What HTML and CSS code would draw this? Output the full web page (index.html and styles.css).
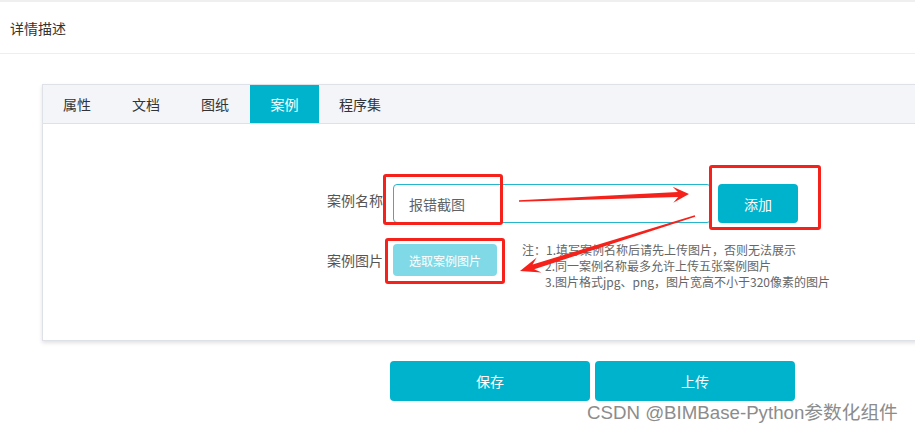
FILE: index.html
```html
<!DOCTYPE html>
<html lang="zh">
<head>
<meta charset="utf-8">
<link rel="stylesheet" href="styles.css">
</head>
<body>
<div class="page">
  <div class="topband"></div>
  <div class="header">详情描述</div>
  <div class="panel">
    <div class="tabs">
      <div class="tab">属性</div>
      <div class="tab">文档</div>
      <div class="tab">图纸</div>
      <div class="tab active">案例</div>
      <div class="tab">程序集</div>
    </div>
    <div class="panel-body">
      <div class="form-row">
        <div class="label">案例名称</div>
        <div class="controls">
          <div class="input">报错截图</div>
          <button class="btn btn-add">添加</button>
        </div>
      </div>
      <div class="form-row row2">
        <div class="label">案例图片</div>
        <div class="controls">
          <button class="btn btn-pick">选取案例图片</button>
          <div class="notes">
            <div>注：1.填写案例名称后请先上传图片，否则无法展示</div>
            <div class="indent">2.同一案例名称最多允许上传五张案例图片</div>
            <div class="indent">3.图片格式jpg、png，图片宽高不小于320像素的图片</div>
          </div>
        </div>
      </div>
    </div>
  </div>
  <div class="actions">
    <button class="btn btn-big">保存</button>
    <button class="btn btn-big">上传</button>
  </div>

  <div class="mark mark1"></div>
  <div class="mark mark2"></div>
  <div class="mark mark3"></div>
  <svg class="arrows" width="915" height="434" viewBox="0 0 915 434">
    <polygon fill="#f5221b" points="519,200.3 677.9,192 672.7,186.7 689,194 673.3,202.7 678.1,197 519,201.7"/>
    <polygon fill="#f5221b" points="694.8,215.3 532.6,264.4 536.7,257.4 520,271 541.5,272.6 534.2,269.2 695.2,216.7"/>
  </svg>
  <div class="watermark">CSDN @BIMBase-Python参数化组件</div>
</div>
</body>
</html>
```

FILE: styles.css
```css
* { box-sizing: border-box; }
html, body {
  margin: 0;
  padding: 0;
  background: #fff;
}
body {
  font-family: "Noto Sans CJK SC", "Noto Sans", sans-serif;
  font-size: 14px;
  color: #333;
}
.page {
  position: relative;
  width: 915px;
  height: 434px;
  overflow: hidden;
}
.topband {
  height: 2px;
  background: #efefef;
}
.header {
  height: 52px;
  line-height: 52px;
  padding-left: 10px;
  border-bottom: 1px solid #eeeeee;
  color: #333;
  font-size: 14px;
}
.panel {
  margin: 30px 0 0 42px;
  width: 900px;
  border: 1px solid #dfe1e8;
  box-shadow: 0 2px 4px rgba(0, 0, 0, 0.12);
  background: #fff;
}
.tabs {
  display: flex;
  height: 39px;
  background: #f4f5f9;
  border-bottom: 1px solid #dfe1e8;
}
.tab {
  padding: 0 20px;
  line-height: 38px;
  border-right: 1px solid transparent;
  color: #333;
  font-size: 14px;
}
.tab.active {
  background: #00b3cd;
  color: #fff;
  border-right: none;
  width: 69px;
  text-align: center;
  padding: 0;
}
.panel-body {
  height: 216px;
  padding: 60px 0 0 250px;
}
.form-row {
  display: grid;
  grid-template-columns: 90px auto;
  column-gap: 10px;
  align-items: start;
}
.row2 {
  margin-top: 21px;
}
.label {
  text-align: right;
  line-height: 32px;
  color: #555;
  font-size: 14px;
  white-space: nowrap;
}
.controls {
  display: flex;
  align-items: flex-start;
}
.input {
  width: 318px;
  height: 39px;
  border: 1px solid #25b6cd;
  border-radius: 4px;
  padding-left: 15px;
  line-height: 39px;
  color: #606266;
  font-size: 14px;
}
.btn {
  border: none;
  border-radius: 4px;
  background: #00b3cd;
  color: #fff;
  font-family: inherit;
  padding: 0;
  cursor: pointer;
}
.btn-add {
  width: 80px;
  height: 39px;
  margin-left: 7px;
  font-size: 14px;
}
.btn-pick {
  width: 104px;
  height: 32px;
  background: #80d9e6;
  font-size: 12px;
}
.notes {
  margin-left: 25px;
  font-size: 12px;
  line-height: 16px;
  color: #666;
  margin-top: -2px;
}
.indent {
  padding-left: 23px;
}
.actions {
  display: flex;
  gap: 5px;
  margin: 20px 0 0 390px;
}
.btn-big {
  width: 200px;
  height: 40px;
  font-size: 14px;
}
.mark {
  position: absolute;
  border: 3px solid #f5221b;
  border-radius: 3px;
}
.mark1 { left: 383px; top: 174px; width: 120px; height: 51px; }
.mark2 { left: 709px; top: 165px; width: 112px; height: 65px; }
.mark3 { left: 385px; top: 238px; width: 120px; height: 46px; }
.arrows {
  position: absolute;
  left: 0;
  top: 0;
}
.watermark {
  position: absolute;
  left: 587px;
  top: 401px;
  font-family: "Liberation Sans", "Noto Sans CJK SC", sans-serif;
  font-size: 18.7px;
  line-height: 24px;
  color: #8c8c8c;
  white-space: nowrap;
  text-shadow: 0 0 1px #fff;
}
```
